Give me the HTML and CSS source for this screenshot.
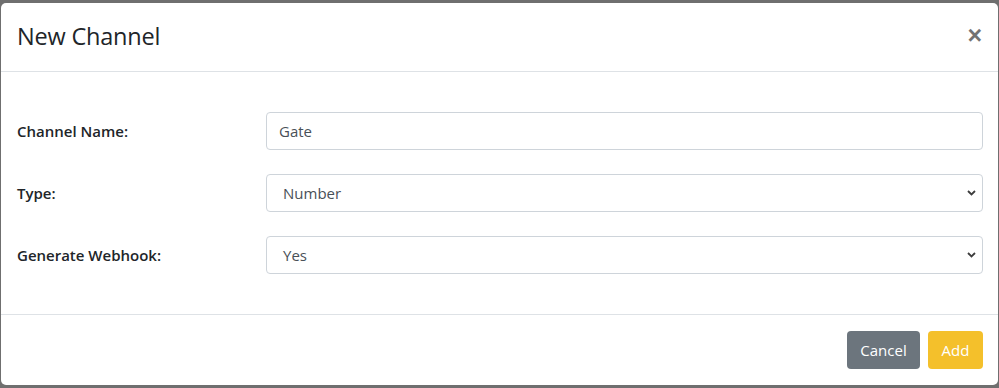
FILE: index.html
```html
<!DOCTYPE html>
<html lang="en">
<head>
<meta charset="utf-8">
<title>New Channel</title>
<link rel="stylesheet" href="styles.css">
</head>
<body>
<div class="backdrop">
  <div class="modal">
    <div class="modal-header">
      <h4 class="modal-title">New Channel</h4>
      <button class="close" type="button" aria-label="Close">&times;</button>
    </div>
    <div class="modal-body">
      <div class="form-row">
        <label class="label">Channel Name:</label>
        <div class="field"><input class="control" type="text" value="Gate"></div>
      </div>
      <div class="form-row">
        <label class="label">Type:</label>
        <div class="field">
          <div class="control select"><span>Number</span>
            <svg class="chev" width="9" height="6" viewBox="0 0 9 6"><path d="M1 1l3.5 3.5L8 1" fill="none" stroke="#3d3d3d" stroke-width="1.8"/></svg>
          </div>
        </div>
      </div>
      <div class="form-row">
        <label class="label">Generate Webhook:</label>
        <div class="field">
          <div class="control select"><span>Yes</span>
            <svg class="chev" width="9" height="6" viewBox="0 0 9 6"><path d="M1 1l3.5 3.5L8 1" fill="none" stroke="#3d3d3d" stroke-width="1.8"/></svg>
          </div>
        </div>
      </div>
    </div>
    <div class="modal-footer">
      <button class="btn btn-secondary" type="button">Cancel</button>
      <button class="btn btn-warning" type="button">Add</button>
    </div>
  </div>
</div>
</body>
</html>
```
FILE: styles.css
```css
html, body {
  margin: 0;
  padding: 0;
  background: #6f6f6f;
}
body {
  font-family: "Open Sans", "Noto Sans", sans-serif;
  color: #212529;
  width: 999px;
  height: 388px;
  overflow: hidden;
}
.backdrop {
  padding: 3px 1px 0 1px;
}
.modal {
  background: #fff;
  border-radius: 5px;
  height: 382px;
  display: flex;
  flex-direction: column;
}
.modal-header {
  height: 69px;
  box-sizing: border-box;
  border-bottom: 1px solid #dee2e6;
  display: flex;
  align-items: center;
  justify-content: space-between;
  padding: 0 16px 0 16px;
}
.modal-title {
  margin: 0 0 2px 0;
  font-size: 23.5px;
  font-weight: 500;
  letter-spacing: -0.2px;
  color: #212529;
}
.close {
  border: 0;
  background: transparent;
  font-family: "Liberation Sans", sans-serif;
  font-size: 25px;
  font-weight: 700;
  color: #000;
  opacity: 0.55;
  padding: 0;
  margin: 0 0 4px 0;
  line-height: 1;
}
.modal-body {
  padding: 40px 15px 40px 16px;
  display: flex;
  flex-direction: column;
  gap: 24px;
}
.form-row {
  display: flex;
  align-items: center;
}
.label {
  width: 249px;
  font-size: 15px;
  font-weight: 600;
  color: #212529;
}
.field {
  flex: 1;
}
.control {
  box-sizing: border-box;
  width: 100%;
  height: 38px;
  border: 1px solid #ced4da;
  border-radius: 4px;
  padding: 0 12px;
  font-family: "Open Sans", "Noto Sans", sans-serif;
  font-size: 15px;
  color: #495057;
  background: #fff;
  outline: none;
}
.select {
  display: flex;
  align-items: center;
  justify-content: space-between;
  padding: 0 6px 0 16px;
}
.chev {
  display: block;
}
.modal-footer {
  flex: 1;
  border-top: 1px solid #dee2e6;
  display: flex;
  justify-content: flex-end;
  align-items: center;
  gap: 8px;
  padding: 0 15px 0 16px;
}
.btn {
  height: 38px;
  border: 0;
  border-radius: 4px;
  padding: 0 12px;
  font-family: "Open Sans", "Noto Sans", sans-serif;
  font-size: 15px;
  color: #fff;
  line-height: 38px;
}
.btn-secondary {
  background: #6c757d;
  width: 73px;
}
.btn-warning {
  background: #f4c02b;
  width: 55px;
}
```
